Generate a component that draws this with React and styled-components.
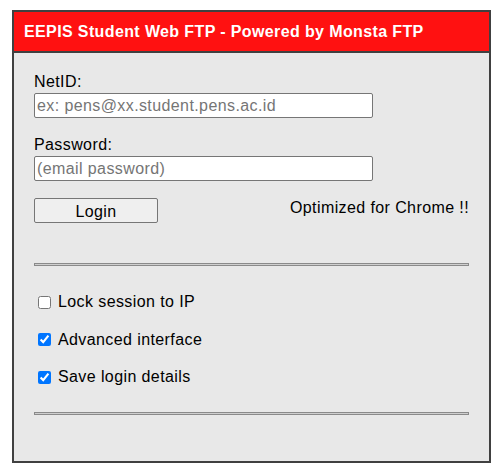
import React from "react";
import styled, { createGlobalStyle } from "styled-components";

const Global = createGlobalStyle`
  html, body { margin: 0; padding: 0; background: #ffffff; }
  body { font-family: "Liberation Sans", Arial, sans-serif; letter-spacing: 0.4px; }
`;

const Page = styled.div`
  padding: 10px 0 0 12px;
`;

const Panel = styled.div`
  box-sizing: border-box;
  width: 479px;
  height: 453px;
  border: 2px solid #404040;
  display: flex;
  flex-direction: column;
`;

const Header = styled.div`
  background: #ff1111;
  border-bottom: 2px solid #404040;
  display: flex;
  align-items: center;
  padding: 1px 10px 0 10px;
  height: 38px;
  color: #ffffff;
  font-weight: bold;
  font-size: 16px;
  line-height: 18px;
  letter-spacing: 0.38px;
`;

const Body = styled.div`
  flex: 1;
  background: #e8e8e8;
  padding: 20px 20px 0 20px;
  font-size: 16px;
  color: #000;
`;

const Label = styled.div`
  line-height: 18px;
  margin-top: ${(p) => p.$top || 0}px;
  margin-bottom: 2px;
`;

const TextInput = styled.input`
  display: block;
  box-sizing: border-box;
  width: 339px;
  height: 25px;
  margin: 0;
  padding: 1px 2px;
  border: 1px solid #767676;
  border-radius: 2px;
  background: #ffffff;
  font-family: "Liberation Sans", Arial, sans-serif;
  font-size: 16px;
  letter-spacing: 0.4px;
  color: #000;
  &::placeholder { color: #757575; }
`;

const ActionRow = styled.div`
  display: flex;
  justify-content: space-between;
  align-items: flex-start;
  margin-top: 17px;
`;

const Button = styled.button`
  box-sizing: border-box;
  width: 124px;
  height: 25px;
  margin: 0;
  padding: 2px 0 0 0;
  background: #efefef;
  border: 1px solid #767676;
  border-radius: 2px;
  font-family: "Liberation Sans", Arial, sans-serif;
  font-size: 16px;
  letter-spacing: 0.4px;
  color: #000;
`;

const Note = styled.div`
  line-height: 18px;
  padding-top: 1px;
`;

const Divider = styled.div`
  height: 1px;
  border: 1px solid #8a8a8a;
  background: #cfcfcf;
  margin-top: ${(p) => p.$top}px;
`;

const Options = styled.div`
  display: flex;
  flex-direction: column;
  gap: 19.5px;
  margin-top: 27px;
`;

const OptionRow = styled.label`
  display: flex;
  align-items: center;
  height: 18px;
  line-height: 18px;
`;

const Check = styled.input`
  width: 13px;
  height: 13px;
  margin: 0 7px 0 4px;
  padding: 0;
  flex: none;
`;

const options = [
  { label: "Lock session to IP", checked: false },
  { label: "Advanced interface", checked: true },
  { label: "Save login details", checked: true },
];

export default function App() {
  return (
    <>
      <Global />
      <Page>
        <Panel>
          <Header>EEPIS Student Web FTP - Powered by Monsta FTP</Header>
          <Body>
            <Label>NetID:</Label>
            <TextInput type="text" placeholder="ex: pens@xx.student.pens.ac.id" />
            <Label $top={18}>Password:</Label>
            <TextInput type="password" placeholder="(email password)" />
            <ActionRow>
              <Button type="button">Login</Button>
              <Note>Optimized for Chrome !!</Note>
            </ActionRow>
            <Divider $top={40} />
            <Options>
              {options.map((o) => (
                <OptionRow key={o.label}>
                  <Check type="checkbox" defaultChecked={o.checked} />
                  {o.label}
                </OptionRow>
              ))}
            </Options>
            <Divider $top={26} />
          </Body>
        </Panel>
      </Page>
    </>
  );
}
